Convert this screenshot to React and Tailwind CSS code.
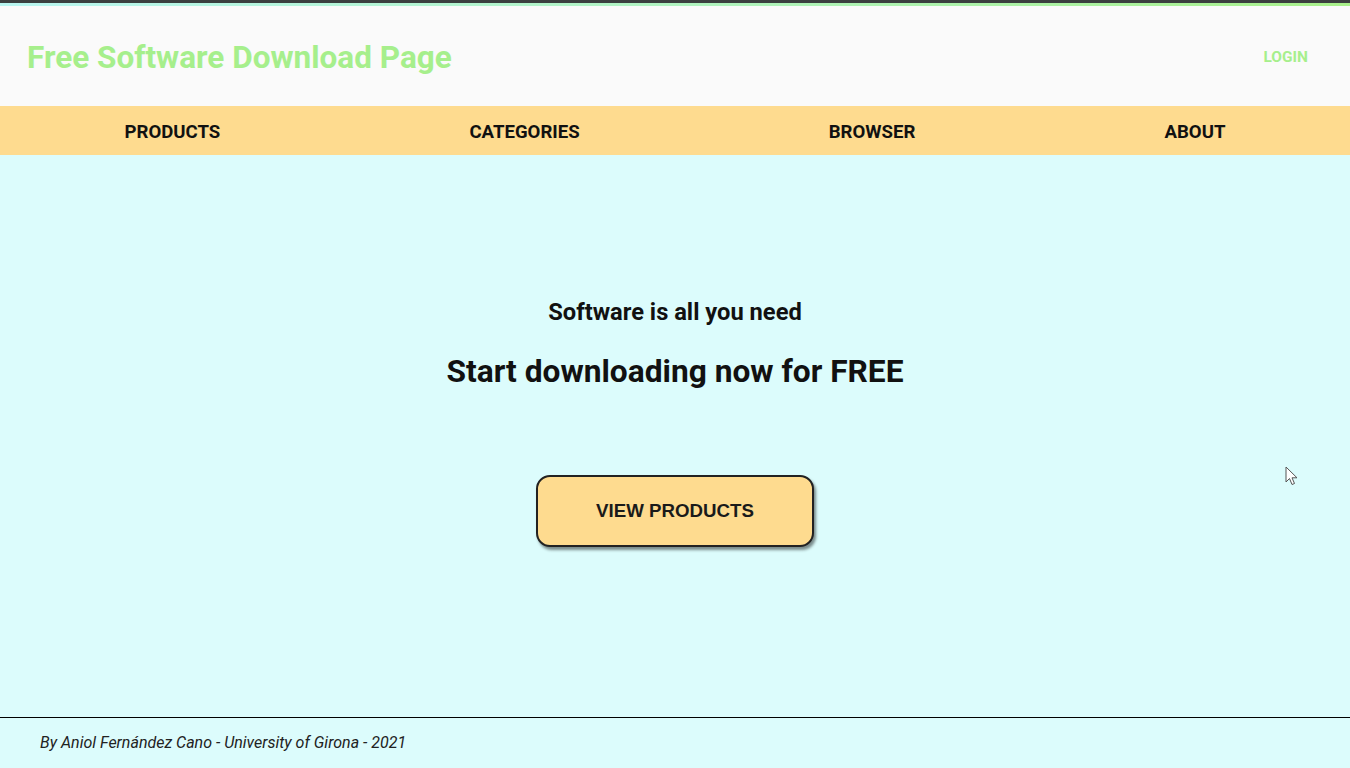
import React from 'react';

const navItems = ['PRODUCTS', 'CATEGORIES', 'BROWSER', 'ABOUT'];

const Cursor = () => (
  <svg
    className="absolute left-[1285px] top-[466px] w-[14px] h-[21px]"
    viewBox="0 0 14 21"
    fill="none"
  >
    <path
      d="M1 1 L1 16 L4.5 12.5 L7 18.5 L9.5 17.5 L7 11.8 L12 11.8 Z"
      fill="#ffffff"
      stroke="#555555"
      strokeWidth="1"
      strokeLinejoin="round"
    />
  </svg>
);

const App = () => {
  return (
    <div className="relative min-h-[768px] flex flex-col bg-[#dcfcfc] font-['Roboto',sans-serif]">
      {/* top strip */}
      <div className="h-[3px] bg-[#3b3f3f]" />
      <div className="h-[3px] bg-gradient-to-r from-[#b8f5f0] to-[#a8f08a]" />

      <header className="h-[100px] bg-[#fafafa] flex items-center justify-between pl-[27px] pr-[42px] pt-[3px]">
        <h1 className="text-[31.5px] font-bold text-[#a6ef8c]">
          Free Software Download Page
        </h1>
        <button className="text-[15.5px] font-bold text-[#a6ef8c]">LOGIN</button>
      </header>

      <nav className="h-[49px] bg-[#fedb8f] flex items-center justify-around pt-[4px]">
        {navItems.map((item) => (
          <a key={item} className="text-[18.6px] font-bold text-[#111] cursor-pointer">
            {item}
          </a>
        ))}
      </nav>

      <main className="flex-1 flex flex-col items-center pt-[142px]">
        <h3 className="text-[23.7px] font-bold text-[#111] leading-[30px]">
          Software is all you need
        </h3>
        <h2 className="mt-[26px] text-[31.7px] font-bold text-[#111] leading-[38px]">
          Start downloading now for FREE
        </h2>
        <button className="mt-[84px] w-[278px] h-[72px] rounded-[14px] border-2 border-[#222] bg-[#fedb8f] shadow-[2px_3px_3px_rgba(0,0,0,0.45)] font-['Liberation_Sans',Arial,sans-serif] text-[18.7px] font-bold text-[#1a1a1a]">
          VIEW PRODUCTS
        </button>
      </main>

      <footer className="h-[51px] border-t border-black flex items-center pl-[40px]">
        <p className="text-[16px] italic text-[#222]">
          By Aniol Fernández Cano - University of Girona - 2021
        </p>
      </footer>

      <Cursor />
    </div>
  );
};

export default App;
